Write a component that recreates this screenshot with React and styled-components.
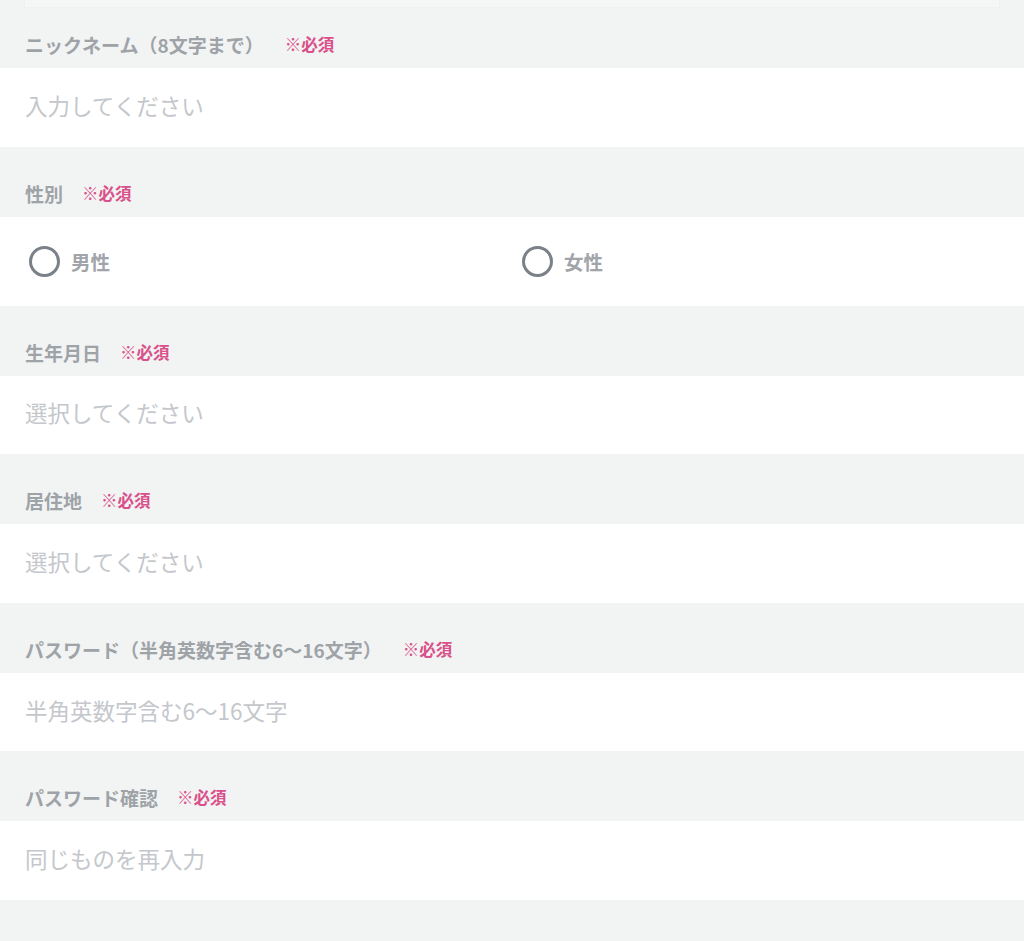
import React, { useState } from 'react';
import styled, { createGlobalStyle } from 'styled-components';

const GlobalStyle = createGlobalStyle`
  body {
    margin: 0;
    background: #f2f3f3;
    font-family: "Noto Sans CJK JP", "Noto Sans", sans-serif;
  }
`;

const Page = styled.div`
  min-height: 100vh;
  background: #f2f3f3;
`;

const TopCard = styled.div`
  height: 8px;
  margin: 0 24px;
  background: #f5f6f6;
  border: 1px solid #eff0f0;
  border-top: none;
  box-sizing: border-box;
`;

const LabelRow = styled.div`
  height: ${p => (p.$first ? 60 : 70)}px;
  box-sizing: border-box;
  display: flex;
  align-items: flex-end;
  padding: 0 25px 11px;
`;

const Label = styled.span`
  font-size: 19px;
  line-height: 25px;
  font-weight: 700;
  color: #9ea3a8;
`;

const Required = styled.span`
  margin-left: ${p => p.$gap}px;
  font-size: 16.5px;
  line-height: 25px;
  font-weight: 700;
  color: #d9508a;
`;

const InputRow = styled.div`
  height: 78.6px;
  box-sizing: border-box;
  background: #fff;
  display: flex;
  align-items: center;
  padding: 0 25px 5px;
`;

const TextInput = styled.input`
  flex: 1;
  border: none;
  outline: none;
  background: transparent;
  padding: 0;
  font-family: inherit;
  font-size: 22.5px;
  color: #555;
  &::placeholder {
    color: #c4c7cb;
  }
`;

const RadioRow = styled.div`
  height: 89px;
  background: #fff;
  display: grid;
  grid-template-columns: 493px 1fr;
  align-items: center;
  padding-left: 29px;
`;

const RadioLabel = styled.label`
  display: flex;
  align-items: center;
  gap: 11px;
  cursor: pointer;
  font-size: 19.5px;
  font-weight: 700;
  color: #a1a5aa;
`;

const Circle = styled.span`
  width: 31px;
  height: 31px;
  box-sizing: border-box;
  border-radius: 50%;
  border: 3px solid #7b8188;
  display: flex;
  align-items: center;
  justify-content: center;
  &::after {
    content: '';
    width: 14px;
    height: 14px;
    border-radius: 50%;
    background: ${p => (p.$on ? '#7b8188' : 'transparent')};
  }
`;

const fields = [
  { label: 'ニックネーム（8文字まで）', gap: 21, placeholder: '入力してください' },
  { label: '性別', gap: 19, radio: true },
  { label: '生年月日', gap: 19, placeholder: '選択してください', select: true },
  { label: '居住地', gap: 19, placeholder: '選択してください', select: true },
  { label: 'パスワード（半角英数字含む6〜16文字）', gap: 21, placeholder: '半角英数字含む6〜16文字', type: 'password' },
  { label: 'パスワード確認', gap: 19, placeholder: '同じものを再入力', type: 'password' },
];

const App = () => {
  const [gender, setGender] = useState(null);

  return (
    <Page>
      <GlobalStyle />
      <TopCard />
      {fields.map((f, i) => (
        <div key={f.label}>
          <LabelRow $first={i === 0}>
            <Label>{f.label}</Label>
            <Required $gap={f.gap}>※必須</Required>
          </LabelRow>
          {f.radio ? (
            <RadioRow>
              {['男性', '女性'].map(g => (
                <RadioLabel key={g} onClick={() => setGender(g)}>
                  <Circle $on={gender === g} />
                  {g}
                </RadioLabel>
              ))}
            </RadioRow>
          ) : (
            <InputRow>
              <TextInput
                type={f.type || 'text'}
                placeholder={f.placeholder}
                readOnly={f.select}
              />
            </InputRow>
          )}
        </div>
      ))}
    </Page>
  );
};

export default App;
